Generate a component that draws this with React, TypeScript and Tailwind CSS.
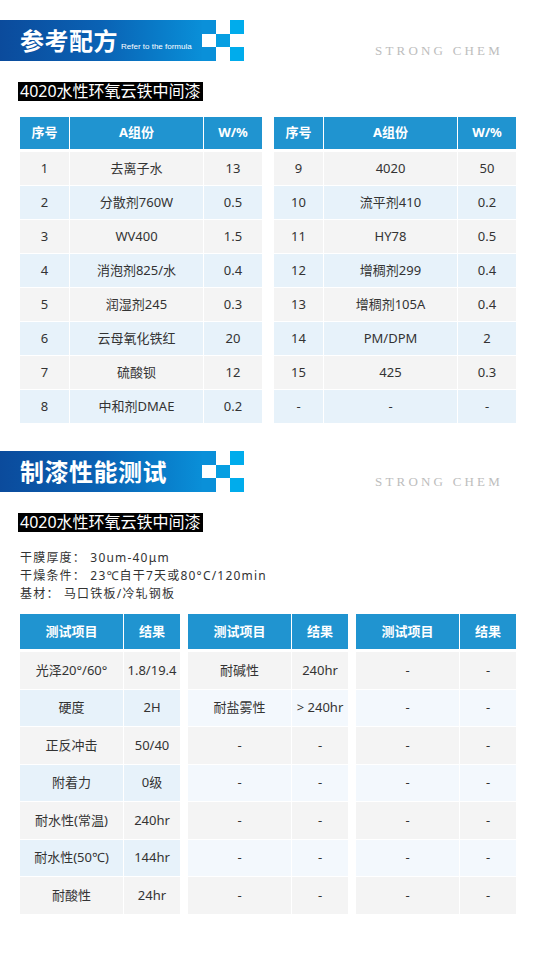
import React from "react";

// formula rows: [no, name, weight]
const formulaLeft = [
  ["1", "去离子水", "13"],
  ["2", "分散剂760W", "0.5"],
  ["3", "WV400", "1.5"],
  ["4", "消泡剂825/水", "0.4"],
  ["5", "润湿剂245", "0.3"],
  ["6", "云母氧化铁红", "20"],
  ["7", "硫酸钡", "12"],
  ["8", "中和剂DMAE", "0.2"],
];

const formulaRight = [
  ["9", "4020", "50"],
  ["10", "流平剂410", "0.2"],
  ["11", "HY78", "0.5"],
  ["12", "增稠剂299", "0.4"],
  ["13", "增稠剂105A", "0.4"],
  ["14", "PM/DPM", "2"],
  ["15", "425", "0.3"],
  ["-", "-", "-"],
];

const testA = [
  ["光泽20°/60°", "1.8/19.4"],
  ["硬度", "2H"],
  ["正反冲击", "50/40"],
  ["附着力", "0级"],
  ["耐水性(常温)", "240hr"],
  ["耐水性(50℃)", "144hr"],
  ["耐酸性", "24hr"],
];

const testB = [
  ["耐碱性", "240hr"],
  ["耐盐雾性", "> 240hr"],
  ["-", "-"],
  ["-", "-"],
  ["-", "-"],
  ["-", "-"],
  ["-", "-"],
];

const testC = Array.from({ length: 7 }, () => ["-", "-"]);

// Section banner with the checker squares on the right
const SectionHeader = ({ title, sub }: { title: string; sub?: string }) => (
  <div className="flex items-start">
    <div className="flex h-[41px]">
      <div className="flex w-[202px] items-center bg-gradient-to-r from-[#0b4b9c] via-[#0a62b4] to-[#0a8fd8] pl-[20px]">
        <span className="text-[24px] font-bold leading-none tracking-[0.5px] text-white">{title}</span>
        {sub && (
          <span className="ml-[3px] mt-[12px] font-['Liberation_Sans',sans-serif] text-[8px] leading-none text-white">
            {sub}
          </span>
        )}
      </div>
      <div className="grid grid-cols-[14px_14px_14px] grid-rows-3">
        <div className="bg-[#0a90d9]" />
        <div className="bg-white" />
        <div className="bg-[#00acec]" />
        <div className="bg-white" />
        <div className="bg-[#079fe2]" />
        <div className="bg-white" />
        <div className="bg-[#0a90d9]" />
        <div className="bg-white" />
        <div className="bg-[#00acec]" />
      </div>
    </div>
    <div className="ml-auto pr-[37px] pt-[24px] font-['Liberation_Serif',serif] text-[13px] leading-none tracking-[3.2px] text-[#bdbdbd]">
      STRONG CHEM
    </div>
  </div>
);

const Label = () => (
  <div className="ml-[18px] w-fit bg-black px-[2px] text-[16px] leading-[19px] text-white">
    4020水性环氧云铁中间漆
  </div>
);

const FormulaTable = ({ rows }: { rows: string[][] }) => (
  <div className="flex w-[242px] flex-col gap-px text-[13px] text-[#333]">
    <div className="mb-[2px] grid h-[32px] grid-cols-[49px_133px_58px] gap-x-px font-bold text-white">
      <div className="flex items-center justify-center bg-[#2094d0]">序号</div>
      <div className="flex items-center justify-center bg-[#2094d0]">A组份</div>
      <div className="flex items-center justify-center bg-[#2094d0]">W/%</div>
    </div>
    {rows.map((r, i) => {
      const bg = i % 2 === 0 ? "bg-[#f4f4f4]" : "bg-[#e7f2fa]";
      return (
        <div key={i} className="grid h-[33px] grid-cols-[49px_133px_58px] gap-x-px">
          {r.map((c, j) => (
            <div key={j} className={`flex items-center justify-center ${bg}`}>
              {c}
            </div>
          ))}
        </div>
      );
    })}
  </div>
);

const TestTable = ({ rows, light }: { rows: string[][]; light?: boolean }) => (
  <div className="flex w-[160px] flex-col gap-px text-[13px] text-[#333]">
    <div className="mb-[2px] grid h-[35px] grid-cols-[103px_56px] gap-x-px font-bold text-white">
      <div className="flex items-center justify-center bg-[#2094d0]">测试项目</div>
      <div className="flex items-center justify-center bg-[#2094d0]">结果</div>
    </div>
    {rows.map((r, i) => {
      const bg = i % 2 === 0 ? "bg-[#f4f4f4]" : light ? "bg-[#f3f8fd]" : "bg-[#e7f2fa]";
      return (
        <div key={i} className="grid h-[36.5px] grid-cols-[103px_56px] gap-x-px">
          {r.map((c, j) => (
            <div key={j} className={`flex items-center justify-center whitespace-nowrap ${bg}`}>
              {c}
            </div>
          ))}
        </div>
      );
    })}
  </div>
);

export default function App() {
  return (
    <div className="min-h-[960px] w-[540px] bg-white pt-[20px] font-['Noto_Sans','Noto_Sans_CJK_SC',sans-serif]">
      <SectionHeader title="参考配方" sub="Refer to the formula" />

      <div className="mt-[21px]">
        <Label />
      </div>

      <div className="mt-[16px] flex gap-[12px] pl-[20px]">
        <FormulaTable rows={formulaLeft} />
        <FormulaTable rows={formulaRight} />
      </div>

      <div className="mt-[28px]">
        <SectionHeader title="制漆性能测试" />
      </div>

      <div className="mt-[21px]">
        <Label />
      </div>

      <div className="mt-[17px] pl-[20px] text-[12px] leading-[18px] tracking-[1.2px] text-[#333]">
        <div className="whitespace-pre">干膜厚度： 30um-40μm</div>
        <div className="whitespace-pre">干燥条件： 23℃自干7天或80°C/120min</div>
        <div className="whitespace-pre">基材： 马口铁板/冷轧钢板</div>
      </div>

      <div className="mt-[11px] flex gap-[8px] pl-[20px]">
        <TestTable rows={testA} />
        <TestTable rows={testB} light />
        <TestTable rows={testC} light />
      </div>
    </div>
  );
}
